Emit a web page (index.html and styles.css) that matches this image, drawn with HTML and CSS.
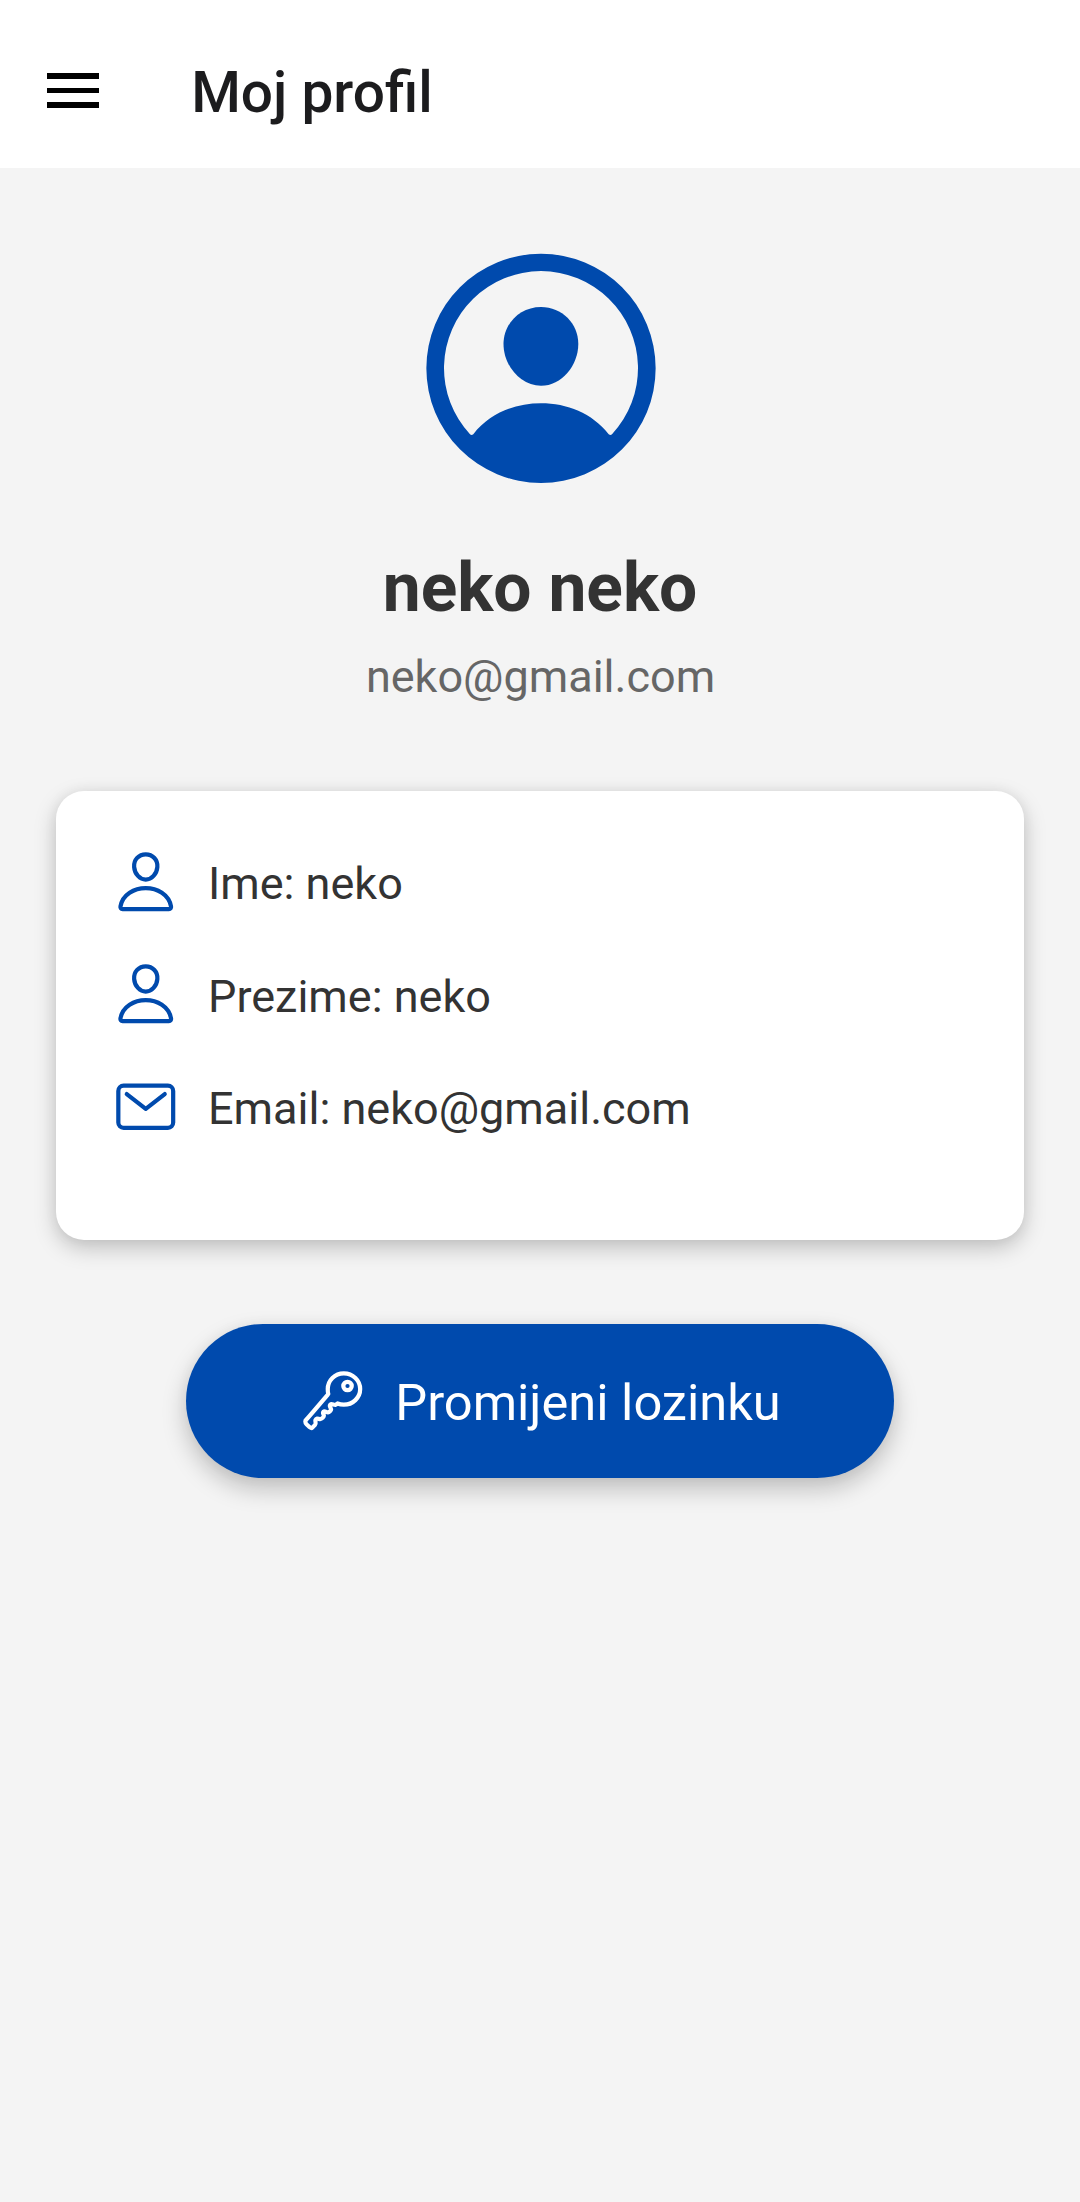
FILE: index.html
```html
<!DOCTYPE html>
<html lang="hr">
<head>
<meta charset="utf-8">
<title>Moj profil</title>
<link rel="stylesheet" href="styles.css">
</head>
<body>
<svg class="defs" aria-hidden="true">
  <symbol id="person" viewBox="0 0 512 512">
    <path d="M344 144c-3.92 52.87-44 96-88 96s-84.15-43.12-88-96c-4-55 35-96 88-96s92 42 88 96z"/>
    <path d="M256 304c-87 0-175.3 48-191.64 138.6C62.39 453.52 68.57 464 80 464h352c11.44 0 17.62-10.48 15.65-21.4C431.3 352 343 304 256 304z"/>
  </symbol>
</svg>
<header class="topbar">
  <button class="menu" aria-label="Izbornik"><span></span><span></span><span></span></button>
  <h1 class="title">Moj profil</h1>
</header>
<main class="profile">
  <svg class="avatar" viewBox="-1 0 282 282" aria-hidden="true">
    <path fill-rule="evenodd" d="M141 25.7a114.6 114.6 0 1 0 0 229.2a114.6 114.6 0 1 0 0-229.2zM70 206.2A97 97 0 1 1 212 206.2Q210.500 207.600 208.700 206.200C192 185 167 175.300 141 175.300S90 185 73.300 206.200Q71.500 207.600 70 206.200z"/>
    <path d="M141 79C162 79 178.300 95.500 178.300 116C178.300 137.500 161.500 157.800 141 157.800S103.500 137.500 103.500 116C103.500 95.500 120 79 141 79z"/>
  </svg>
  <h2 class="name">neko neko</h2>
  <p class="mail">neko@gmail.com</p>
  <section class="card">
    <div class="row"><svg class="icon"><use href="#person"/></svg><span>Ime: neko</span></div>
    <div class="row"><svg class="icon"><use href="#person"/></svg><span>Prezime: neko</span></div>
    <div class="row"><svg class="icon" viewBox="0 0 512 512"><rect x="48" y="96" width="416" height="320" rx="40"/><path d="M112 160l144 112 144-112"/></svg><span>Email: neko@gmail.com</span></div>
  </section>
  <button class="action">
    <svg class="icon" viewBox="0 0 512 512"><path d="M218.100 167.170c0 13 0 25.600 4.100 37.400-43.100 50.600-156.900 184.300-167.500 194.500a20.170 20.170 0 00-6.700 15c0 8.500 5.200 16.700 9.600 21.300 6.600 6.900 34.800 33 40 28 15.400-15 18.500-19 24.800-25.200 9.500-9.300-1-28.300 2.300-36s6.800-9.200 12.500-10.400 15.800 2.900 23.700 3c8.300.1 12.800-3.400 19-9.200 5-4.600 8.600-8.900 8.700-15.600.2-9-12.800-20.900-3.100-30.400s23.700 6.200 34 5 22.800-15.500 24.100-21.600-11.700-21.800-9.700-30.700c.7-3 6.800-10 11.400-11s25 6.900 29.600 5.900c5.600-1.200 12.100-7.100 17.400-10.400 15.500 6.700 29.600 9.400 47.700 9.400 68.500 0 124-53.400 124-119.200S408.500 48 340 48s-121.900 53.370-121.900 119.170z"/><circle cx="368" cy="144" r="32"/></svg>
    <span>Promijeni lozinku</span>
  </button>
</main>
</body>
</html>
```
FILE: styles.css
```css
* { box-sizing: border-box; }

body {
  margin: 0;
  min-height: 2202px;
  background: #f4f4f4;
  color: #333;
  font-family: Roboto, sans-serif;
  font-size: 45px;
}

.defs { display: block; width: 0; height: 0; }

.topbar {
  display: flex;
  align-items: center;
  height: 168px;
  padding: 13px 47.300px 0;
  background: #fff;
}

.menu {
  display: flex;
  flex-direction: column;
  gap: 8.500px;
  width: 51.400px;
  padding: 0;
  border: 0;
  background: none;
}

.menu span { height: 5.700px; background: #000; }

.title {
  margin: 5px 0 0 92.500px;
  color: #1c1c1e;
  font-size: 56.800px;
  font-weight: 500;
  line-height: 66px;
}

.profile {
  display: flex;
  flex-direction: column;
  align-items: center;
  padding-top: 60px;
}

.avatar { width: 282px; height: 282px; fill: #004aad; }

.name {
  margin: 36px 0 0;
  font-size: 67.700px;
  font-weight: 700;
  line-height: 84px;
}

.mail {
  margin: 17px 0 0;
  padding-left: 1px;
  color: #666;
  line-height: 60px;
}

.card {
  display: flex;
  flex-direction: column;
  gap: 44.800px;
  width: 968px;
  height: 449px;
  margin-top: 84px;
  padding: 57px 56px 55px;
  border-radius: 28px;
  background: #fff;
  box-shadow: 0 8px 22px rgba(0, 0, 0, .21), 0 0 14px rgba(0, 0, 0, .05);
}

.row { display: flex; align-items: center; gap: 28.500px; height: 67.500px; }

.icon {
  flex: none;
  width: 67.500px;
  height: 67.500px;
  fill: none;
  stroke: #004aad;
  stroke-width: 32;
  stroke-linecap: round;
  stroke-linejoin: round;
}

.row span { position: relative; top: 2px; }

.action {
  display: flex;
  align-items: center;
  justify-content: center;
  gap: 28.500px;
  width: 708px;
  height: 154px;
  margin-top: 84px;
  padding: 0;
  border: 0;
  border-radius: 77px;
  background: #004aad;
  color: #fff;
  font: 400 50.600px Roboto, sans-serif;
  box-shadow: 0 11px 24px rgba(0, 0, 0, .22), 0 0 14px rgba(0, 0, 0, .04);
}

.action .icon { stroke: #fff; }
.action span { position: relative; top: 1px; }
```
